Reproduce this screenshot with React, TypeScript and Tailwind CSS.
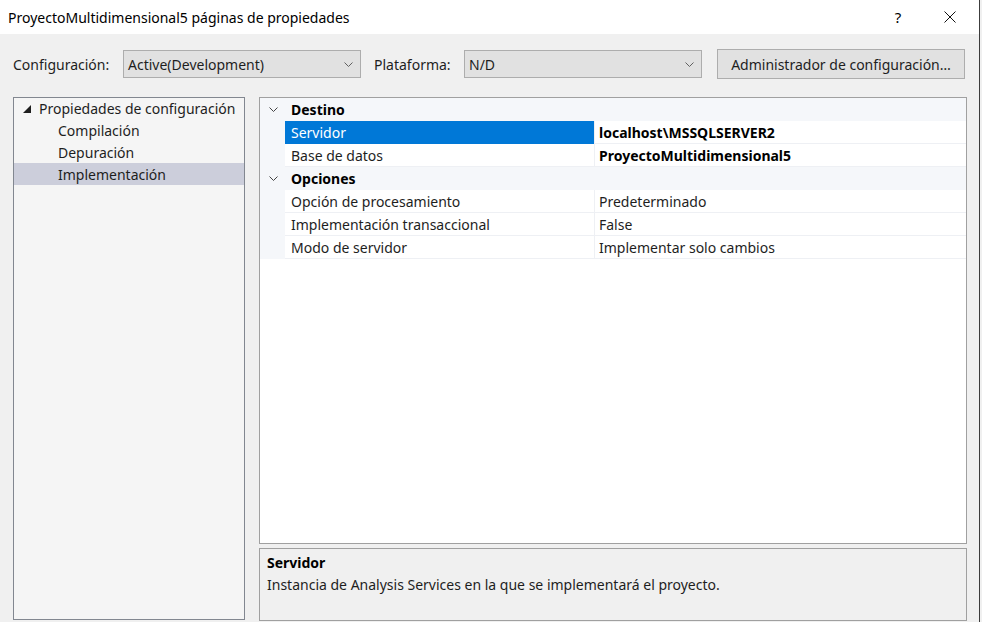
import React from 'react';

const font = { fontFamily: '"Noto Sans", "Open Sans", Arial, sans-serif' };

function Chevron({ className }: { className?: string }) {
  return (
    <svg className={className} width="9" height="5" viewBox="0 0 9 5" fill="none">
      <path d="M0.5 0.5 L4.5 4.5 L8.5 0.5" stroke="currentColor" strokeWidth="1" />
    </svg>
  );
}

function Combo({ value, width }: { value: string; width: string }) {
  return (
    <div className={`${width} h-[28px] flex items-center justify-between pl-[4px] pr-[7px] bg-[#e1e1e1] border border-[#adadad] text-[#1e1e1e]`}>
      <span>{value}</span>
      <Chevron className="text-[#606060]" />
    </div>
  );
}

interface Row {
  name: string;
  value: string;
  bold?: boolean;
  selected?: boolean;
}

const groups: { title: string; rows: Row[] }[] = [
  {
    title: 'Destino',
    rows: [
      { name: 'Servidor', value: 'localhost\\MSSQLSERVER2', bold: true, selected: true },
      { name: 'Base de datos', value: 'ProyectoMultidimensional5', bold: true },
    ],
  },
  {
    title: 'Opciones',
    rows: [
      { name: 'Opción de procesamiento', value: 'Predeterminado' },
      { name: 'Implementación transaccional', value: 'False' },
      { name: 'Modo de servidor', value: 'Implementar solo cambios' },
    ],
  },
];

const treeItems = ['Compilación', 'Depuración', 'Implementación'];

export default function App() {
  return (
    <div className="w-[982px] h-[622px] flex bg-[#f0f0f0] text-[14px] text-[#1e1e1e] overflow-hidden" style={font}>
      <div className="w-[980px] h-full flex flex-col border-r border-[#3c3c3c]">
        {/* Title bar */}
        <div className="h-[34px] shrink-0 bg-white flex items-center pl-[8px] text-black">
          <span className="flex-1">ProyectoMultidimensional5 páginas de propiedades</span>
          <span className="w-[20px] text-center text-[15px]">?</span>
          <div className="w-[36px]" />
          <svg className="mr-[23px]" width="12" height="12" viewBox="0 0 12 12">
            <path d="M0.5 0.5 L11.5 11.5 M11.5 0.5 L0.5 11.5" stroke="#111" strokeWidth="1" />
          </svg>
        </div>

        {/* Configuration row */}
        <div className="h-[30px] mt-[15px] flex items-center pl-[13px] whitespace-nowrap">
          <span className="w-[110px]">Configuración:</span>
          <Combo value="Active(Development)" width="w-[238px]" />
          <span className="w-[90px] ml-[13px]">Plataforma:</span>
          <Combo value="N/D" width="w-[238px]" />
          <button className="ml-[15px] w-[248px] h-[30px] bg-[#e1e1e1] border border-[#adadad] text-[#1e1e1e]">
            Administrador de configuración…
          </button>
        </div>

        {/* Main area */}
        <div className="flex-1 flex mt-[18px] pl-[13px] pb-[1px] gap-[14px] whitespace-nowrap">
          {/* Tree */}
          <div className="w-[232px] h-[523px] border border-[#828790] bg-[#f5f5f5]">
            <div className="h-[21px] flex items-center pl-[9px]">
              <svg width="8" height="8" viewBox="0 0 8 8" className="mr-[8px]">
                <polygon points="8,0 8,8 0,8" fill="#1e1e1e" />
              </svg>
              <span>Propiedades de configuración</span>
            </div>
            {treeItems.map((item) => (
              <div
                key={item}
                className={`h-[22px] flex items-center pl-[44px] ${item === 'Implementación' ? 'bg-[#cccedb]' : ''}`}
              >
                {item}
              </div>
            ))}
          </div>

          {/* Property grid + description */}
          <div className="w-[708px] flex flex-col gap-[4px]">
            <div className="h-[447px] border border-[#a0a0a0] bg-white flex flex-col">
              {groups.map((g) => (
                <div key={g.title}>
                  <div className="h-[23px] flex items-center bg-[#f5f7fa]">
                    <div className="w-[25px] flex justify-center pl-[2px]">
                      <Chevron className="text-[#444]" />
                    </div>
                    <span className="pl-[6px] font-bold text-black">{g.title}</span>
                  </div>
                  {g.rows.map((r) => (
                    <div key={r.name} className="h-[23px] flex">
                      <div className="w-[25px] bg-[#f5f7fa]" />
                      <div
                        className={`w-[309px] flex items-center pl-[6px] border-b ${
                          r.selected ? 'bg-[#0078d7] text-white border-[#0078d7]' : 'border-[#eef0f4]'
                        }`}
                      >
                        {r.name}
                      </div>
                      <div
                        className={`flex-1 flex items-center pl-[4px] border-l border-b border-[#eef0f4] ${
                          r.bold ? 'font-bold text-black' : ''
                        }`}
                      >
                        {r.value}
                      </div>
                    </div>
                  ))}
                </div>
              ))}
            </div>
            <div className="flex-1 border border-[#a0a0a0] bg-[#f0f0f0] px-[7px] pt-[3px]">
              <div className="font-bold text-black leading-[22px]">Servidor</div>
              <div className="leading-[22px]">Instancia de Analysis Services en la que se implementará el proyecto.</div>
            </div>
          </div>
        </div>
      </div>
      <div className="w-[2px] bg-[#f0f0f0]" />
    </div>
  );
}
